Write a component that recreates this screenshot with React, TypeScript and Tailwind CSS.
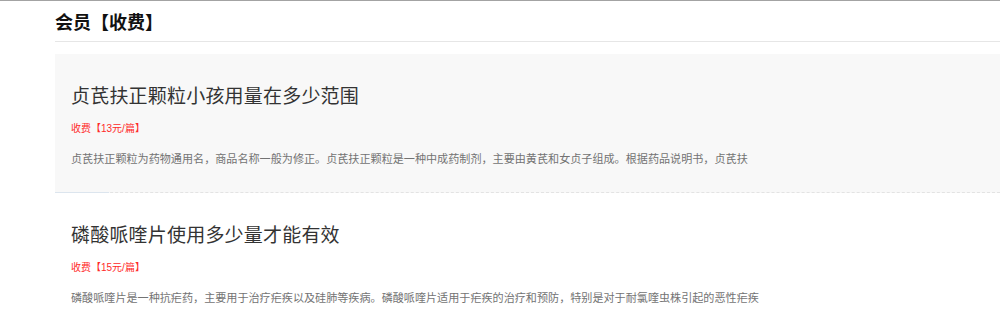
import React from "react";

const items = [
  {
    title: "贞芪扶正颗粒小孩用量在多少范围",
    price: "收费【13元/篇】",
    desc: "贞芪扶正颗粒为药物通用名，商品名称一般为修正。贞芪扶正颗粒是一种中成药制剂，主要由黄芪和女贞子组成。根据药品说明书，贞芪扶",
    active: true,
  },
  {
    title: "磷酸哌喹片使用多少量才能有效",
    price: "收费【15元/篇】",
    desc: "磷酸哌喹片是一种抗疟药，主要用于治疗疟疾以及硅肺等疾病。磷酸哌喹片适用于疟疾的治疗和预防，特别是对于耐氯喹虫株引起的恶性疟疾",
    active: false,
  },
];

export default function App() {
  return (
    <div
      className="w-[1000px] h-[329px] overflow-hidden bg-white border-t border-[#a3a3a3]"
      style={{ fontFamily: '"Liberation Sans", "Noto Sans CJK SC", sans-serif' }}
    >
      <div className="pl-[55px]">
        <div className="h-[41px] flex items-center pt-[3px] border-b border-[#e6e6e6]">
          <h1 className="text-[18px] font-bold text-[#111] leading-none">会员【收费】</h1>
        </div>
        <div className="mt-[12px]">
          {items.map((it, i) => (
            <div
              key={i}
              className={`relative px-4 pt-[29px] pb-[25px] border-b border-dashed border-[#e3e3e3] ${
                it.active ? "bg-[#f8f8f8]" : "bg-white"
              }`}
            >
              <h2 className="text-[19px] leading-[28px] text-[#333] tracking-[0.2px]">{it.title}</h2>
              <p className="mt-[11px] text-[10px] leading-[14px] text-[#ff2a2a]">{it.price}</p>
              <p className="mt-[15px] text-[11.1px] leading-[16px] text-[#737373] whitespace-nowrap">
                {it.desc}
              </p>
              {it.active && (
                <div className="absolute left-0 bottom-[-1px] w-[54px] h-px bg-[#dce5ee]" />
              )}
            </div>
          ))}
        </div>
      </div>
    </div>
  );
}
